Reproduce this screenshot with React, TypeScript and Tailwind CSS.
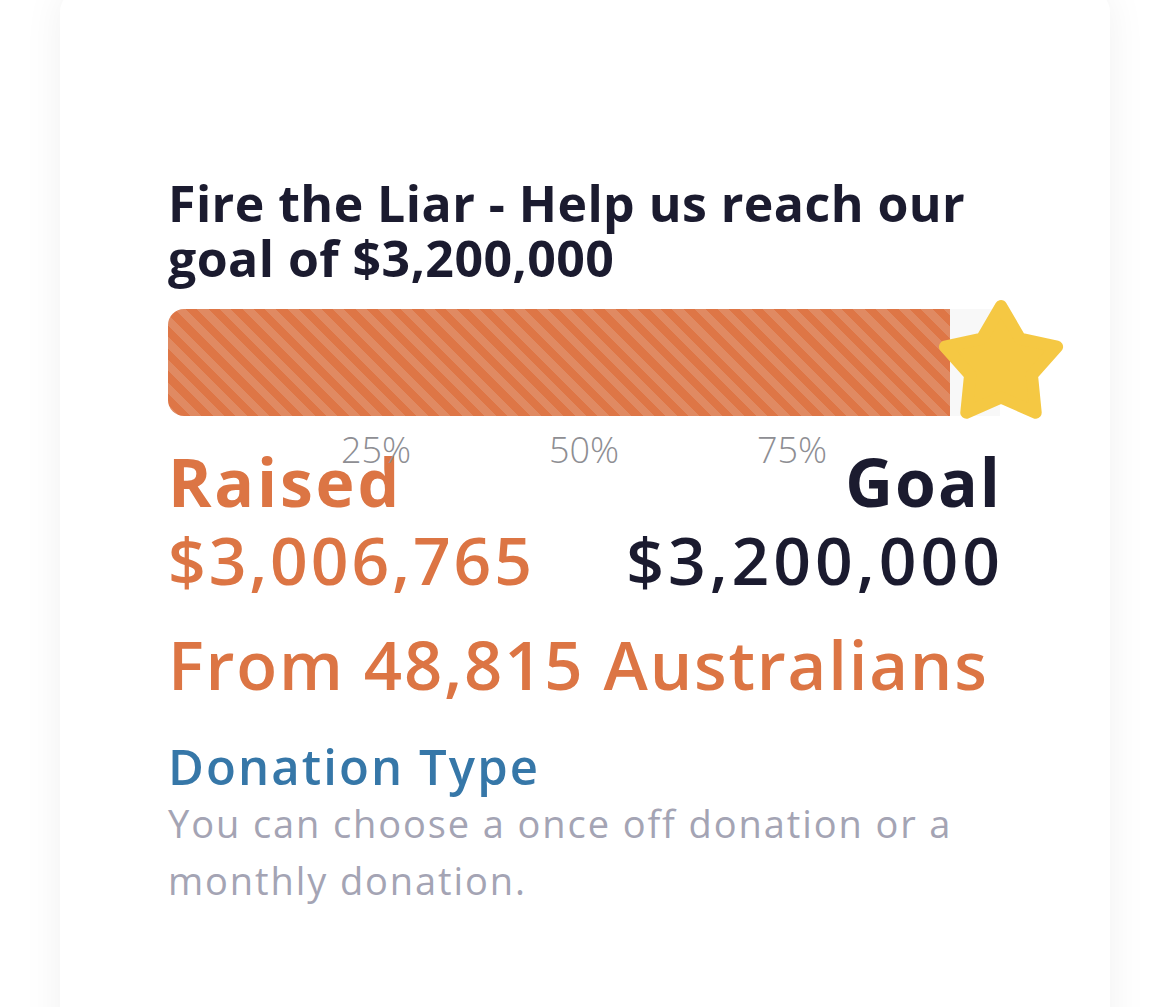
import React from "react";

const raised = 3006765;
const goal = 3200000;

function Star() {
  const pts: string[] = [];
  for (let k = 0; k < 10; k++) {
    const a = ((-90 + 36 * k) * Math.PI) / 180;
    const r = k % 2 === 0 ? 58 : 32;
    pts.push(`${(r * Math.cos(a)).toFixed(2)},${(r * Math.sin(a)).toFixed(2)}`);
  }
  return (
    <svg viewBox="-65 -65 130 130" className="absolute left-[767px] top-[-10px] h-[132px] w-[132px]">
      <polygon points={pts.join(" ")} fill="#f5c843" stroke="#f5c843" strokeWidth="12" strokeLinejoin="round" />
    </svg>
  );
}

function ProgressBar() {
  const pct = (raised / goal) * 100;
  return (
    <div className="relative mt-[23px] h-[107px] w-[832px]">
      <div className="h-full w-full rounded-l-[16px] bg-[#f8f8f8]">
        <div
          className="h-full rounded-l-[16px] bg-[repeating-linear-gradient(45deg,#e08a62_0px,#e08a62_8px,#de7646_8px,#de7646_16px)]"
          style={{ width: `${pct}%` }}
        />
      </div>
      <Star />
      {["25%", "50%", "75%"].map((l, i) => (
        <span
          key={l}
          className={`absolute top-[123px] -translate-x-1/2 text-[36px] leading-[36px] font-light text-[#8e8e93] ${
            i === 0 ? "left-1/4" : i === 1 ? "left-1/2" : "left-3/4"
          }`}
        >
          {l}
        </span>
      ))}
    </div>
  );
}

export default function App() {
  return (
    <div className="min-h-screen bg-white font-['Open_Sans',sans-serif] overflow-hidden">
      <div className="ml-[60px] mt-[-10px] min-h-[1100px] w-[1050px] rounded-[22px] bg-white pl-[108px] pt-[186px] shadow-[0_0_40px_rgba(0,0,0,0.06)]">
        <h1 className="w-[832px] text-[50px] leading-[55px] font-bold tracking-[0.45px] text-[#1b1b2f]">
          Fire the Liar - Help us reach our goal of $3,200,000
        </h1>

        <ProgressBar />

        <div className="mt-[26px] flex w-[832px] justify-between">
          <div className="text-[#dc7544]">
            <div className="text-[66px] leading-[78px] font-bold tracking-[2.8px]">Raised</div>
            <div className="text-[66px] leading-[78px] font-semibold tracking-[2.9px]">$3,006,765</div>
          </div>
          <div className="text-right text-[#1b1b2f]">
            <div className="-mr-[2px] text-[66px] leading-[78px] font-bold tracking-[2px]">Goal</div>
            <div className="-mr-[4px] text-[66px] leading-[78px] font-semibold tracking-[4px]">$3,200,000</div>
          </div>
        </div>

        <p className="mt-[27px] text-[67px] leading-[78px] font-semibold tracking-[1.8px] text-[#dc7544]">
          From 48,815 Australians
        </p>

        <h2 className="mt-[34px] text-[49px] leading-[58px] font-semibold tracking-[2.1px] text-[#3677a8]">
          Donation Type
        </h2>
        <p className="w-[832px] text-[38px] leading-[57px] tracking-[1.9px] text-[#a4a4b4]">
          You can choose a once off donation or a monthly donation.
        </p>
      </div>
    </div>
  );
}
